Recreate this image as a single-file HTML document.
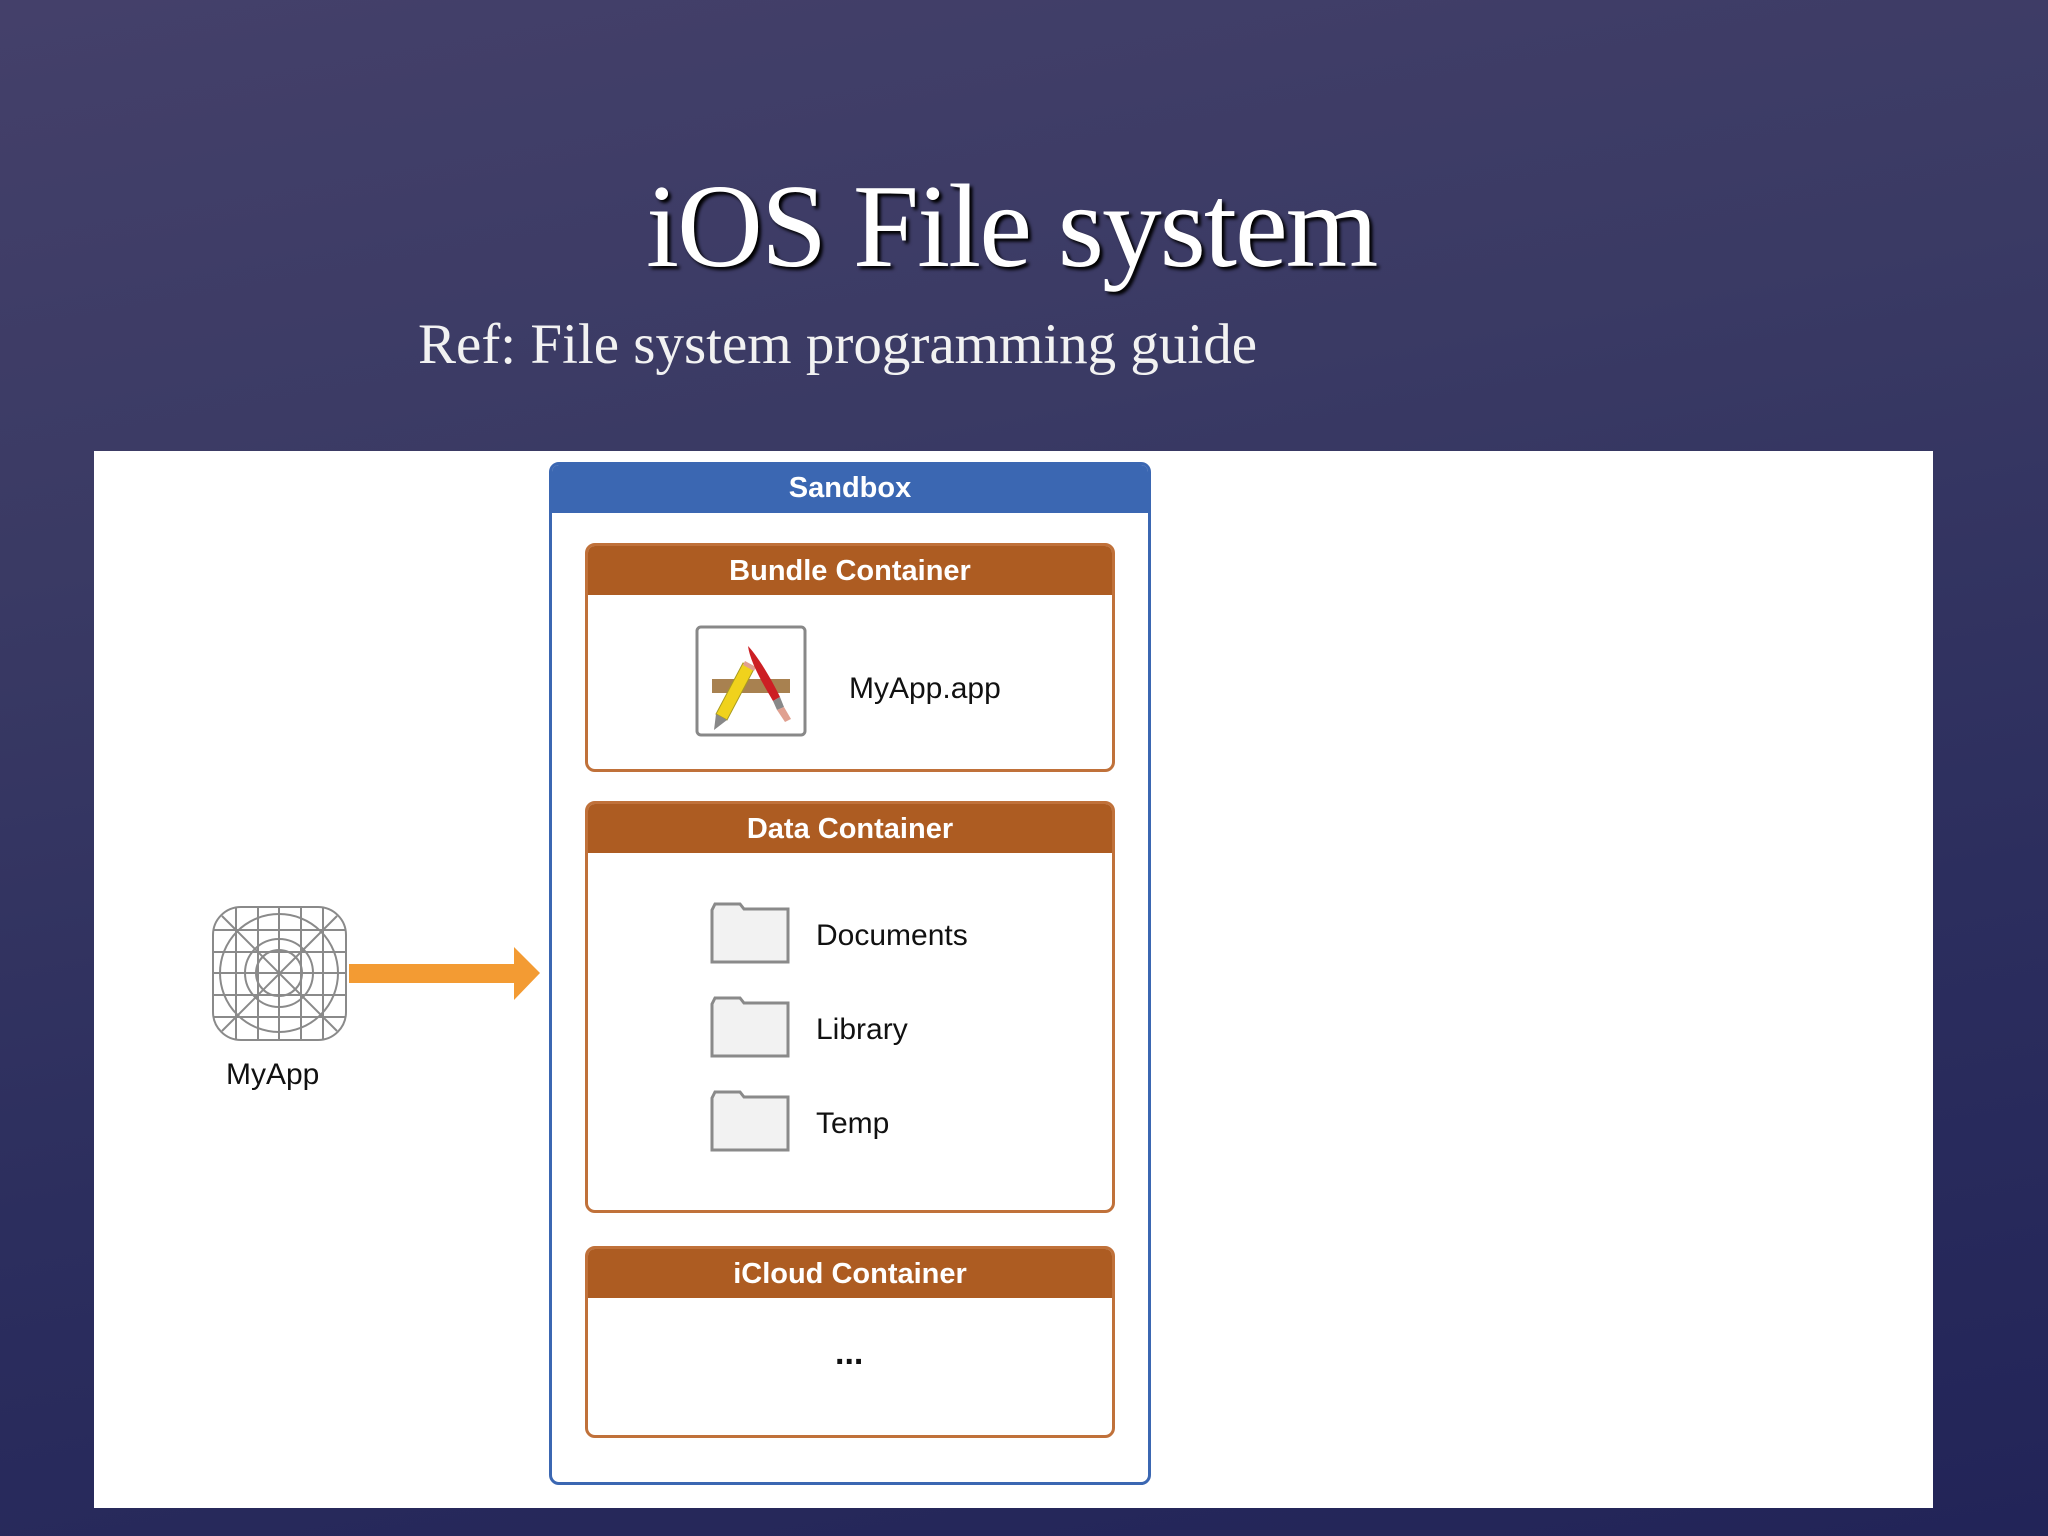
<!DOCTYPE html>
<html><head><meta charset="utf-8"><style>
html,body{margin:0;padding:0}
body{width:2048px;height:1536px;position:relative;overflow:hidden;
background:linear-gradient(170deg,#44406a 0%,#3a3a64 30%,#2c2e5e 65%,#222458 100%);
font-family:"Liberation Sans",sans-serif}
.t{position:absolute;color:#fff;font-family:"Liberation Serif",serif;white-space:nowrap}
#title{left:646px;top:158px;font-size:119px;letter-spacing:-2px;text-shadow:3px 3px 3px #000}
#sub{left:418px;top:312px;font-size:57px;color:#f2f2f2}
#panel{position:absolute;left:94px;top:451px;width:1839px;height:1057px;background:#fff}
.box{position:absolute;box-sizing:border-box;border-radius:10px;overflow:hidden;background:#fff}
.hd{color:#fff;font-weight:bold;text-align:center;font-size:29px}
.sb{left:549px;top:462px;width:602px;height:1023px;border:3px solid #3b67b2}
.sb .hd{background:#3b67b2;height:48px;line-height:46px}
.c{border:3px solid #c0713a}
.c .hd{background:#ad5c22;height:49px;line-height:50px}
.lbl{position:absolute;font-size:30px;color:#111;white-space:nowrap}
</style></head><body>
<div class="t" id="title">iOS File system</div>
<div class="t" id="sub">Ref: File system programming guide</div>
<div id="panel"></div>
<div class="box sb"><div class="hd">Sandbox</div></div>
<div class="box c" style="left:585px;top:543px;width:530px;height:229px"><div class="hd">Bundle Container</div></div>
<div class="box c" style="left:585px;top:801px;width:530px;height:412px"><div class="hd">Data Container</div></div>
<div class="box c" style="left:585px;top:1246px;width:530px;height:192px"><div class="hd">iCloud Container</div></div>

<svg style="position:absolute;left:0;top:0" width="2048" height="1536">
 <g stroke="#8a8a8a" stroke-width="2" fill="none">
  <rect x="213" y="907" width="133" height="133" rx="28"/>
  <line x1="236" y1="907" x2="236" y2="1040"/><line x1="258" y1="907" x2="258" y2="1040"/>
  <line x1="279" y1="907" x2="279" y2="1040"/><line x1="301" y1="907" x2="301" y2="1040"/><line x1="323" y1="907" x2="323" y2="1040"/>
  <line x1="213" y1="930" x2="346" y2="930"/><line x1="213" y1="952" x2="346" y2="952"/>
  <line x1="213" y1="973" x2="346" y2="973"/><line x1="213" y1="995" x2="346" y2="995"/><line x1="213" y1="1017" x2="346" y2="1017"/>
  <line x1="222" y1="916" x2="337" y2="1031"/><line x1="337" y1="916" x2="222" y2="1031"/>
  <circle cx="279" cy="973" r="59"/><circle cx="279" cy="973" r="34"/><circle cx="279" cy="973" r="23"/>
 </g>
 <rect x="349" y="964" width="168" height="19" fill="#f39b33"/>
 <polygon points="514,947 540,973 514,1000" fill="#f39b33"/>
 <rect x="697" y="627" width="108" height="108" rx="4" fill="#fff" stroke="#888" stroke-width="3"/>
 <rect x="712" y="679" width="78" height="14" fill="#a88150"/>
 <polygon points="743,663 754,669 727,720 716,714" fill="#f0d21c" stroke="#a89a20" stroke-width="1"/>
 <polygon points="716,714 727,720 714,730" fill="#888"/>
 <path d="M745,661 L756,667 L754,671 L743,665Z" fill="#e0a090"/>
 <path d="M748,646 C757,655 772,680 780,697 L773,701 C763,684 750,662 748,646Z" fill="#cc1f24"/>
 <polygon points="773,701 780,697 784,707 777,710" fill="#888"/>
 <polygon points="777,710 784,707 791,719 785,722" fill="#e0a090"/>
 <g fill="#f2f2f2" stroke="#8a8a8a" stroke-width="3">
  <path d="M712,910 l3,-6 h25 l4,5 h44 v53 h-76z"/>
  <path d="M712,1004 l3,-6 h25 l4,5 h44 v53 h-76z"/>
  <path d="M712,1098 l3,-6 h25 l4,5 h44 v53 h-76z"/>
 </g>
</svg>
<div class="lbl" style="left:226px;top:1058px">MyApp</div>
<div class="lbl" style="left:849px;top:672px">MyApp.app</div>
<div class="lbl" style="left:816px;top:919px">Documents</div>
<div class="lbl" style="left:816px;top:1013px">Library</div>
<div class="lbl" style="left:816px;top:1107px">Temp</div>
<div class="lbl" style="left:835px;top:1334px;font-size:34px;font-weight:bold">...</div>
</body></html>
